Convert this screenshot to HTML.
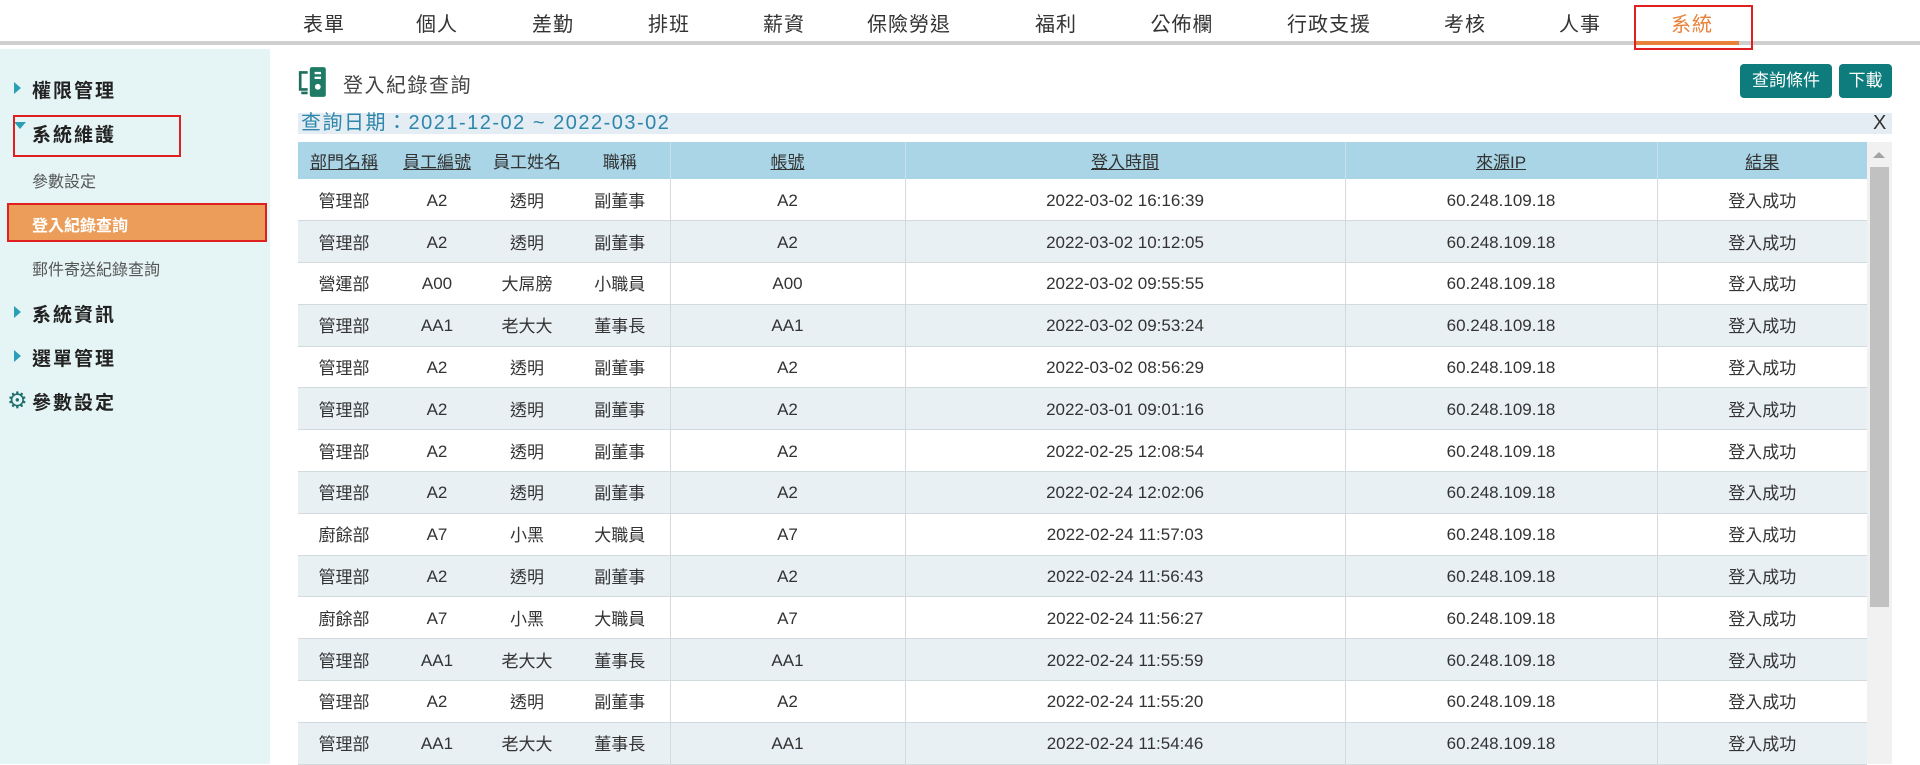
<!DOCTYPE html>
<html><head><meta charset="utf-8"><style>
*{margin:0;padding:0;box-sizing:border-box}
body{width:1920px;height:764px;overflow:hidden;background:#fff;font-family:"Liberation Sans","Noto Sans CJK TC",sans-serif;position:relative;color:#333}
.nav{position:absolute;left:0;top:0;width:1920px;height:45px;border-bottom:4px solid #cfcfcf}
.nav span{position:absolute;top:8px;font-size:20px;color:#333;transform:translateX(-50%);white-space:nowrap;letter-spacing:1px}
.side{position:absolute;left:0;top:49px;width:270px;height:715px;background:#e5f4f4}
.side div{position:absolute;white-space:nowrap}
.top{font-size:19px;font-weight:bold;color:#222;letter-spacing:2px;left:32px}
.sub{font-size:16px;color:#555;left:32px}
.tri{position:absolute;left:14px;width:0;height:0;border-top:6px solid transparent;border-bottom:6px solid transparent;border-left:7px solid #2aa0b8}
table{border-collapse:collapse;table-layout:fixed;position:absolute;left:298px;top:142px}
th{height:37px;background:#a9d5e6;font-weight:normal;font-size:17px;color:#333;text-align:center;padding:0}
th.u{text-decoration:underline}
td{height:41.8px;font-size:17px;line-height:22px;text-align:center;border-bottom:1px solid #d2dade;padding:0;color:#333;font-family:"Noto Sans CJK TC",sans-serif}
td i{font-style:normal;font-family:"Liberation Sans",sans-serif}
tr:nth-child(odd) td{background:#e9f0f4}
.b{border-left:1px solid #d2dade}
th.b{border-left:1px solid #c7e2ec}
</style></head><body>
<div class="nav">
<span style="left:324px">表單</span><span style="left:437px">個人</span><span style="left:553px">差勤</span><span style="left:669px">排班</span><span style="left:784px">薪資</span><span style="left:909px">保險勞退</span><span style="left:1056px">福利</span><span style="left:1182px">公佈欄</span><span style="left:1329px">行政支援</span><span style="left:1465px">考核</span><span style="left:1580px">人事</span><span style="left:1692px;color:#e8823a">系統</span>
</div>
<div style="position:absolute;left:1636px;top:41px;width:103px;height:4px;background:#e8823a"></div>
<div style="position:absolute;left:1634px;top:5px;width:119px;height:45px;border:2px solid #e02020"></div>

<div class="side">
<div class="tri" style="top:33px"></div><div class="top" style="top:27px">權限管理</div>
<div style="position:absolute;left:14px;top:73px;width:0;height:0;border-left:6px solid transparent;border-right:6px solid transparent;border-top:7px solid #2aa0b8"></div>
<div class="top" style="top:71px">系統維護</div>
<div style="left:13px;top:66px;width:168px;height:42px;border:2px solid #e02020"></div>
<div class="sub" style="top:119px">參數設定</div>
<div style="left:7px;top:154px;width:260px;height:39px;background:#eb9d59;border:2px solid #e02020"></div>
<div class="sub" style="top:163px;color:#fff;font-weight:bold">登入紀錄查詢</div>
<div class="sub" style="top:207px">郵件寄送紀錄查詢</div>
<div class="tri" style="top:257px"></div><div class="top" style="top:251px">系統資訊</div>
<div class="tri" style="top:301px"></div><div class="top" style="top:295px">選單管理</div>
<div style="left:7px;top:339px;font-size:23px;color:#1f6f6f;font-family:'DejaVu Sans',sans-serif">⚙</div><div class="top" style="top:339px">參數設定</div>
</div>

<svg style="position:absolute;left:297px;top:66px" width="32" height="32" viewBox="0 0 30 30">
<path d="M10 6H3v16h7" fill="none" stroke="#1f6f5f" stroke-width="2.5"/>
<rect x="4" y="24" width="6" height="2.5" fill="#1f6f5f"/>
<rect x="12" y="1" width="15" height="28" rx="2" fill="#1f7a66"/>
<rect x="16.5" y="5.5" width="6" height="2.2" fill="#fff"/><rect x="16.5" y="10" width="6" height="2.2" fill="#fff"/>
<circle cx="19.5" cy="19.5" r="2.7" fill="#fff"/>
</svg>
<div style="position:absolute;left:343px;top:69px;font-size:20px;color:#444;letter-spacing:1.5px">登入紀錄查詢</div>
<div style="position:absolute;left:1740px;top:64px;width:92px;height:34px;background:#0e7b7c;border-radius:4px;color:#fff;font-size:17px;text-align:center;line-height:34px">查詢條件</div>
<div style="position:absolute;left:1839px;top:64px;width:53px;height:34px;background:#0e7b7c;border-radius:4px;color:#fff;font-size:17px;text-align:center;line-height:34px">下載</div>
<div style="position:absolute;left:298px;top:113px;width:1594px;height:21px;background:#e3edf3"></div>
<div style="position:absolute;left:301px;top:112px;font-size:20px;line-height:22px;color:#2e86ab;letter-spacing:1.5px">查詢日期：2021-12-02 ~ 2022-03-02</div>
<div style="position:absolute;left:1873px;top:112px;font-size:20px;line-height:22px;color:#333">X</div>

<table>
<colgroup><col style="width:92px"><col style="width:94px"><col style="width:86px"><col style="width:100px"><col style="width:235px"><col style="width:440px"><col style="width:312px"><col style="width:210px"></colgroup>
<tr><th class="u">部門名稱</th><th class="u">員工編號</th><th>員工姓名</th><th>職稱</th><th class="u b">帳號</th><th class="u b">登入時間</th><th class="u b">來源IP</th><th class="u b">結果</th></tr>
<tr><td>管理部</td><td><i>A2</i></td><td>透明</td><td>副董事</td><td class="b"><i>A2</i></td><td class="b"><i>2022-03-02 16:16:39</i></td><td class="b"><i>60.248.109.18</i></td><td class="b">登入成功</td></tr>
<tr><td>管理部</td><td><i>A2</i></td><td>透明</td><td>副董事</td><td class="b"><i>A2</i></td><td class="b"><i>2022-03-02 10:12:05</i></td><td class="b"><i>60.248.109.18</i></td><td class="b">登入成功</td></tr>
<tr><td>營運部</td><td><i>A00</i></td><td>大屌膀</td><td>小職員</td><td class="b"><i>A00</i></td><td class="b"><i>2022-03-02 09:55:55</i></td><td class="b"><i>60.248.109.18</i></td><td class="b">登入成功</td></tr>
<tr><td>管理部</td><td><i>AA1</i></td><td>老大大</td><td>董事長</td><td class="b"><i>AA1</i></td><td class="b"><i>2022-03-02 09:53:24</i></td><td class="b"><i>60.248.109.18</i></td><td class="b">登入成功</td></tr>
<tr><td>管理部</td><td><i>A2</i></td><td>透明</td><td>副董事</td><td class="b"><i>A2</i></td><td class="b"><i>2022-03-02 08:56:29</i></td><td class="b"><i>60.248.109.18</i></td><td class="b">登入成功</td></tr>
<tr><td>管理部</td><td><i>A2</i></td><td>透明</td><td>副董事</td><td class="b"><i>A2</i></td><td class="b"><i>2022-03-01 09:01:16</i></td><td class="b"><i>60.248.109.18</i></td><td class="b">登入成功</td></tr>
<tr><td>管理部</td><td><i>A2</i></td><td>透明</td><td>副董事</td><td class="b"><i>A2</i></td><td class="b"><i>2022-02-25 12:08:54</i></td><td class="b"><i>60.248.109.18</i></td><td class="b">登入成功</td></tr>
<tr><td>管理部</td><td><i>A2</i></td><td>透明</td><td>副董事</td><td class="b"><i>A2</i></td><td class="b"><i>2022-02-24 12:02:06</i></td><td class="b"><i>60.248.109.18</i></td><td class="b">登入成功</td></tr>
<tr><td>廚餘部</td><td><i>A7</i></td><td>小黑</td><td>大職員</td><td class="b"><i>A7</i></td><td class="b"><i>2022-02-24 11:57:03</i></td><td class="b"><i>60.248.109.18</i></td><td class="b">登入成功</td></tr>
<tr><td>管理部</td><td><i>A2</i></td><td>透明</td><td>副董事</td><td class="b"><i>A2</i></td><td class="b"><i>2022-02-24 11:56:43</i></td><td class="b"><i>60.248.109.18</i></td><td class="b">登入成功</td></tr>
<tr><td>廚餘部</td><td><i>A7</i></td><td>小黑</td><td>大職員</td><td class="b"><i>A7</i></td><td class="b"><i>2022-02-24 11:56:27</i></td><td class="b"><i>60.248.109.18</i></td><td class="b">登入成功</td></tr>
<tr><td>管理部</td><td><i>AA1</i></td><td>老大大</td><td>董事長</td><td class="b"><i>AA1</i></td><td class="b"><i>2022-02-24 11:55:59</i></td><td class="b"><i>60.248.109.18</i></td><td class="b">登入成功</td></tr>
<tr><td>管理部</td><td><i>A2</i></td><td>透明</td><td>副董事</td><td class="b"><i>A2</i></td><td class="b"><i>2022-02-24 11:55:20</i></td><td class="b"><i>60.248.109.18</i></td><td class="b">登入成功</td></tr>
<tr><td>管理部</td><td><i>AA1</i></td><td>老大大</td><td>董事長</td><td class="b"><i>AA1</i></td><td class="b"><i>2022-02-24 11:54:46</i></td><td class="b"><i>60.248.109.18</i></td><td class="b">登入成功</td></tr>
</table>
<div style="position:absolute;left:1867px;top:142px;width:25px;height:622px;background:#f1f1f1"></div>
<div style="position:absolute;left:1873px;top:152px;width:0;height:0;border-left:6px solid transparent;border-right:6px solid transparent;border-bottom:6px solid #a3a3a3"></div>
<div style="position:absolute;left:1870px;top:167px;width:19px;height:440px;background:#c1c1c1"></div>
</body></html>
